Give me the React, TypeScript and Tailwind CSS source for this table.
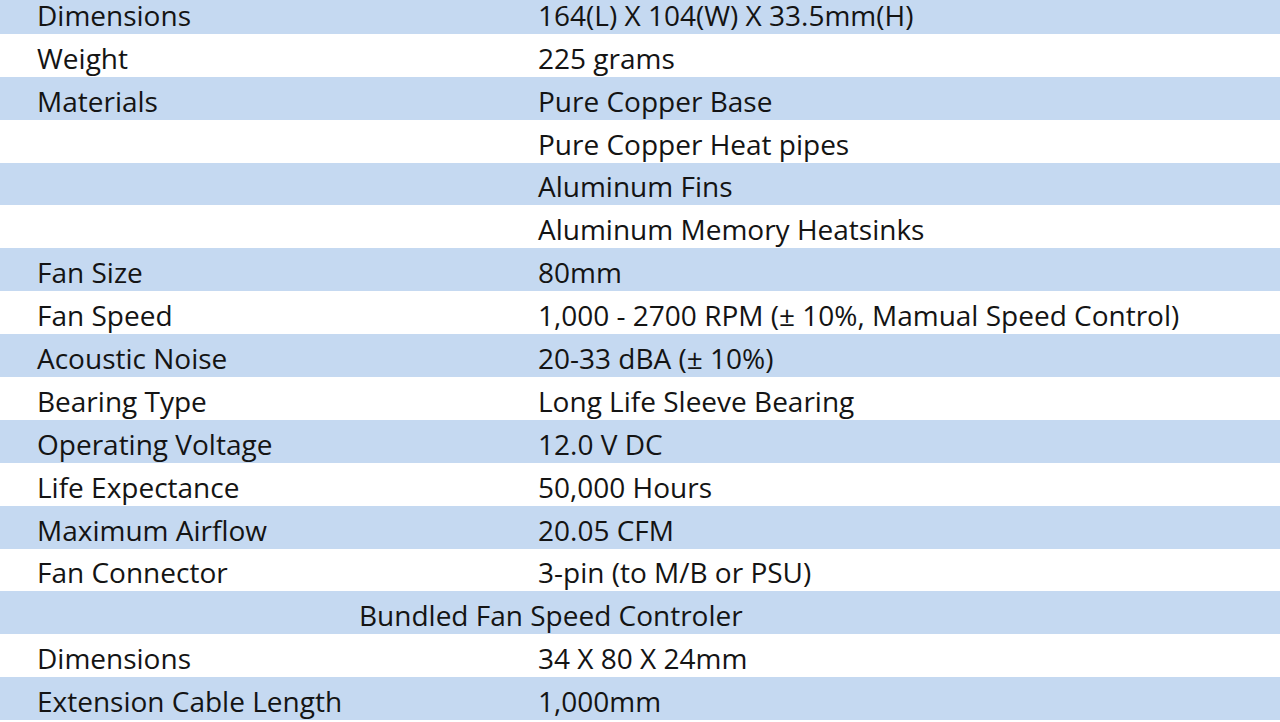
import React from 'react';

type SpecRow = {
  label: string;
  value: string;
  heading?: boolean;
};

const rows: SpecRow[] = [
  { label: 'Dimensions', value: '164(L) X 104(W) X 33.5mm(H)' },
  { label: 'Weight', value: '225 grams' },
  { label: 'Materials', value: 'Pure Copper Base' },
  { label: '', value: 'Pure Copper Heat pipes' },
  { label: '', value: 'Aluminum Fins' },
  { label: '', value: 'Aluminum Memory Heatsinks' },
  { label: 'Fan Size', value: '80mm' },
  { label: 'Fan Speed', value: '1,000 - 2700 RPM (± 10%, Mamual Speed Control)' },
  { label: 'Acoustic Noise', value: '20-33 dBA (± 10%)' },
  { label: 'Bearing Type', value: 'Long Life Sleeve Bearing' },
  { label: 'Operating Voltage', value: '12.0 V DC' },
  { label: 'Life Expectance', value: '50,000 Hours' },
  { label: 'Maximum Airflow', value: '20.05 CFM' },
  { label: 'Fan Connector', value: '3-pin (to M/B or PSU)' },
  { label: 'Bundled Fan Speed Controler', value: '', heading: true },
  { label: 'Dimensions', value: '34 X 80 X 24mm' },
  { label: 'Extension Cable Length', value: '1,000mm' },
];

export default function App() {
  return (
    <div className="w-[1280px] h-[722px] overflow-hidden bg-white">
      <div
        className="-mt-[9px] text-[28px] text-[#141414]"
        style={{ fontFamily: '"Open Sans", "Noto Sans", sans-serif' }}
      >
        {rows.map((row, i) => (
          <div
            key={i}
            className={`flex h-[42.9px] items-end pb-[1px] leading-[36px] whitespace-nowrap ${
              i % 2 === 0 ? 'bg-[#c5d9f1]' : 'bg-white'
            }`}
          >
            {row.heading ? (
              <div className="pl-[359px]">{row.label}</div>
            ) : (
              <>
                <div className="w-[538px] pl-[37px]">{row.label}</div>
                <div>{row.value}</div>
              </>
            )}
          </div>
        ))}
      </div>
    </div>
  );
}
